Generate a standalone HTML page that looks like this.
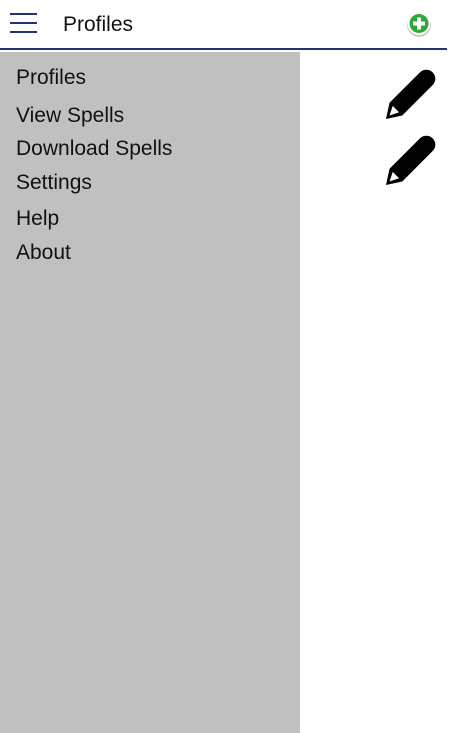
<!DOCTYPE html>
<html><head><style>
body{margin:0;width:450px;height:733px;background:#fff;font-family:"Liberation Sans",Arial,sans-serif;position:relative;overflow:hidden;color:#111}
.hb{position:absolute;left:10px;width:27px;height:2px;background:#1f3576}
.title{position:absolute;left:63px;top:13px;font-size:21px}
.line{position:absolute;left:0;top:48px;width:447px;height:2px;background:#1f3576}
.side{position:absolute;left:0;top:52px;width:300px;height:681px;background:#c0c0c0}
.it{position:absolute;left:16px;font-size:21px;line-height:24px}
.pen{position:absolute;left:384px;width:52px;height:52px}
</style></head><body>
<div class="hb" style="top:13px"></div><div class="hb" style="top:22px"></div><div class="hb" style="top:31px"></div>
<div class="title">Profiles</div>
<svg style="position:absolute;left:405px;top:10px" width="28" height="28" viewBox="0 0 28 28">
<circle cx="14" cy="15" r="12" fill="#999" opacity=".5"/>
<circle cx="14" cy="13.5" r="11.5" fill="#fff"/>
<circle cx="14" cy="13.5" r="9.5" fill="#2ea836"/>
<rect x="12" y="7.5" width="4" height="12" fill="#fff"/><rect x="8" y="11.5" width="12" height="4" fill="#fff"/>
</svg>
<div class="line"></div>
<div class="side">
<div class="it" style="top:14px">Profiles</div>
<div class="it" style="top:52px">View Spells</div>
<div class="it" style="top:85px">Download Spells</div>
<div class="it" style="top:119px">Settings</div>
<div class="it" style="top:155px">Help</div>
<div class="it" style="top:189px">About</div>
</div>
<svg class="pen" style="top:69px" viewBox="0 0 52 52"><g transform="translate(2,50) rotate(-45)">
<path d="M0 0 L14 -9 L57 -9 A9 9 0 0 1 57 9 L14 9 Z" fill="#000"/>
<path d="M5 0 L14 -4.5 L14 4.5 Z" fill="#fff"/></g></svg>
<svg class="pen" style="top:135px" viewBox="0 0 52 52"><g transform="translate(2,50) rotate(-45)">
<path d="M0 0 L14 -9 L57 -9 A9 9 0 0 1 57 9 L14 9 Z" fill="#000"/>
<path d="M5 0 L14 -4.5 L14 4.5 Z" fill="#fff"/></g></svg>
</body></html>
